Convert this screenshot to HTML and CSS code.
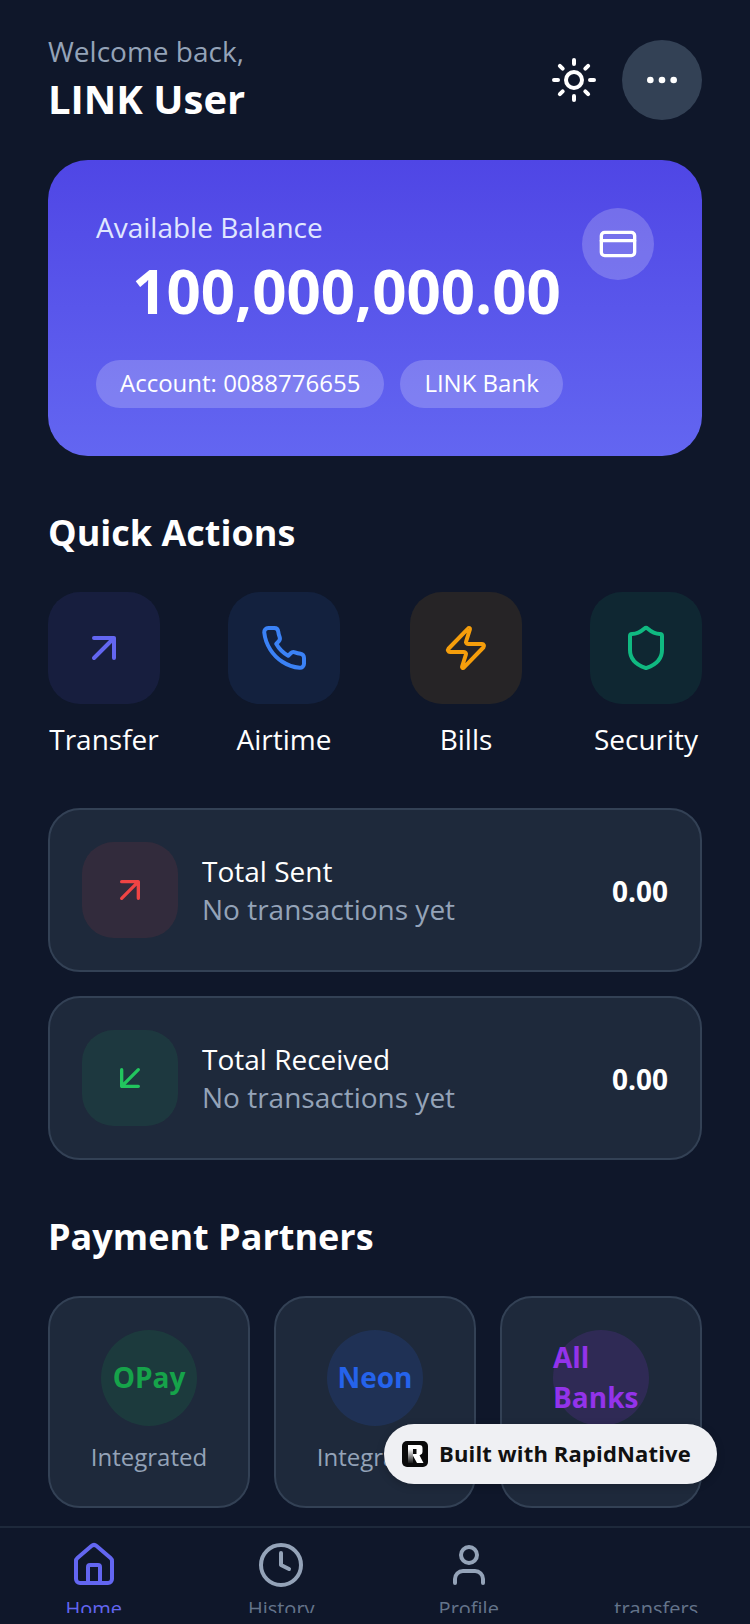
FILE: index.html
```html
<!DOCTYPE html>
<html lang="en">
<head>
    <meta charset="UTF-8">
    <meta name="viewport" content="width=device-width, initial-scale=1.0">
    <title>LINK Bank</title>
    <link rel="stylesheet" href="styles.css">
</head>
<body>

    <div class="screen">
        <main class="content">
            <header class="header">
                <div class="greeting">
                    <p class="welcome">Welcome back,</p>
                    <h1 class="user-name">LINK User</h1>
                </div>
                <div class="header-actions">
                    <svg class="icon icon-48 white" viewBox="0 0 24 24"><circle cx="12" cy="12" r="4"/><path d="M12 2v2M12 20v2M4.93 4.93l1.41 1.41M17.66 17.66l1.41 1.41M2 12h2M20 12h2M6.34 17.66l-1.41 1.41M19.07 4.93l-1.41 1.41"/></svg>
                    <div class="more-button">
                        <svg class="icon icon-40 white" viewBox="0 0 24 24"><circle cx="12" cy="12" r="1"/><circle cx="19" cy="12" r="1"/><circle cx="5" cy="12" r="1"/></svg>
                    </div>
                </div>
            </header>

            <section class="balance-card">
                <div class="balance-top">
                    <div class="balance-left">
                        <p class="balance-label">Available Balance</p>
                        <p class="balance-amount">100,000,000.00</p>
                    </div>
                    <div class="card-badge">
                        <svg class="icon icon-40 white" viewBox="0 0 24 24"><rect x="2" y="5" width="20" height="14" rx="2"/><path d="M2 10h20"/></svg>
                    </div>
                </div>
                <div class="pills">
                    <span class="pill">Account: 0088776655</span>
                    <span class="pill">LINK Bank</span>
                </div>
            </section>

            <h2 class="section-title">Quick Actions</h2>
            <div class="quick-actions">
                <div class="quick-item">
                    <div class="quick-tile tile-indigo">
                        <svg class="icon icon-48 indigo" viewBox="0 0 24 24"><path d="M7 7h10v10M7 17 17 7"/></svg>
                    </div>
                    <span class="quick-label">Transfer</span>
                </div>
                <div class="quick-item">
                    <div class="quick-tile tile-blue">
                        <svg class="icon icon-48 blue" viewBox="0 0 24 24"><path d="M22 16.92v3a2 2 0 0 1-2.18 2 19.79 19.79 0 0 1-8.63-3.07 19.5 19.5 0 0 1-6-6 19.79 19.79 0 0 1-3.07-8.67A2 2 0 0 1 4.11 2h3a2 2 0 0 1 2 1.72 12.84 12.84 0 0 0 .7 2.81 2 2 0 0 1-.45 2.11L8.09 9.91a16 16 0 0 0 6 6l1.27-1.27a2 2 0 0 1 2.11-.45 12.84 12.84 0 0 0 2.81.7A2 2 0 0 1 22 16.92z"/></svg>
                    </div>
                    <span class="quick-label">Airtime</span>
                </div>
                <div class="quick-item">
                    <div class="quick-tile tile-amber">
                        <svg class="icon icon-48 amber" viewBox="0 0 24 24"><path d="M4 14a1 1 0 0 1-.78-1.63l9.9-10.2a.5.5 0 0 1 .86.46l-1.92 6.02A1 1 0 0 0 13 10h7a1 1 0 0 1 .78 1.63l-9.9 10.2a.5.5 0 0 1-.86-.46l1.92-6.02A1 1 0 0 0 11 14z"/></svg>
                    </div>
                    <span class="quick-label">Bills</span>
                </div>
                <div class="quick-item">
                    <div class="quick-tile tile-green">
                        <svg class="icon icon-48 emerald" viewBox="0 0 24 24"><path d="M20 13c0 5-3.5 7.5-7.66 8.95a1 1 0 0 1-.67-.01C7.5 20.5 4 18 4 13V6a1 1 0 0 1 1-1c2 0 4.5-1.2 6.24-2.72a1.17 1.17 0 0 1 1.52 0C14.51 3.81 17 5 19 5a1 1 0 0 1 1 1z"/></svg>
                    </div>
                    <span class="quick-label">Security</span>
                </div>
            </div>

            <div class="stats">
                <div class="stat-card">
                    <div class="stat-icon stat-red">
                        <svg class="icon icon-40 red" viewBox="0 0 24 24"><path d="M7 7h10v10M7 17 17 7"/></svg>
                    </div>
                    <div class="stat-text">
                        <p class="stat-title">Total Sent</p>
                        <p class="stat-sub">No transactions yet</p>
                    </div>
                    <span class="stat-value">0.00</span>
                </div>
                <div class="stat-card">
                    <div class="stat-icon stat-green">
                        <svg class="icon icon-40 green" viewBox="0 0 24 24"><path d="M17 7 7 17M17 17H7V7"/></svg>
                    </div>
                    <div class="stat-text">
                        <p class="stat-title">Total Received</p>
                        <p class="stat-sub">No transactions yet</p>
                    </div>
                    <span class="stat-value">0.00</span>
                </div>
            </div>

            <h2 class="section-title">Payment Partners</h2>
            <div class="partners">
                <div class="partner-card">
                    <div class="partner-circle circle-green"><span class="partner-name text-green">OPay</span></div>
                    <span class="partner-status">Integrated</span>
                </div>
                <div class="partner-card">
                    <div class="partner-circle circle-blue"><span class="partner-name text-blue">Neon</span></div>
                    <span class="partner-status">Integrated</span>
                </div>
                <div class="partner-card">
                    <div class="partner-circle circle-purple"><span class="partner-name text-purple">All Banks</span></div>
                    <span class="partner-status">Integrated</span>
                </div>
            </div>
        </main>

        <nav class="tab-bar">
            <div class="tab tab-active">
                <svg class="icon icon-48 indigo" viewBox="0 0 24 24"><path d="M15 21v-8a1 1 0 0 0-1-1h-4a1 1 0 0 0-1 1v8"/><path d="M3 10a2 2 0 0 1 .709-1.528l7-5.999a2 2 0 0 1 2.582 0l7 5.999A2 2 0 0 1 21 10v9a2 2 0 0 1-2 2H5a2 2 0 0 1-2-2z"/></svg>
                <span class="tab-label">Home</span>
            </div>
            <div class="tab">
                <svg class="icon icon-48 slate" viewBox="0 0 24 24"><circle cx="12" cy="12" r="10"/><path d="M12 6v6l4 2"/></svg>
                <span class="tab-label">History</span>
            </div>
            <div class="tab">
                <svg class="icon icon-48 slate" viewBox="0 0 24 24"><path d="M19 21v-2a4 4 0 0 0-4-4H9a4 4 0 0 0-4 4v2"/><circle cx="12" cy="7" r="4"/></svg>
                <span class="tab-label">Profile</span>
            </div>
            <div class="tab">
                <div class="icon-48"></div>
                <span class="tab-label">transfers</span>
            </div>
        </nav>

        <div class="built-badge">
            <svg class="built-logo" viewBox="0 0 26 26">
                <defs>
                    <linearGradient id="stemFade" x1="0" y1="0" x2="0" y2="1">
                        <stop offset="0" stop-color="#fff"/>
                        <stop offset="1" stop-color="#1a1a1a"/>
                    </linearGradient>
                </defs>
                <rect width="26" height="26" rx="5" fill="#0a0a0a"/>
                <path d="M6 4h11.5a3 3 0 0 1 3 3v4a3 3 0 0 1-2 2.8l-1 .4 4 7.8H15l-5-9h4.5V8H6z" fill="#fff"/>
                <path d="M6 8h5v14H6z" fill="url(#stemFade)"/>
            </svg>
            <span class="built-text">Built with RapidNative</span>
        </div>
    </div>

</body>
</html>
```

FILE: styles.css
```css
* {
    box-sizing: border-box;
}

body {
    font-family: "Open Sans", "Noto Sans", sans-serif;
    background-color: #0f172a;
    color: #fff;
    margin: 0;
    padding: 0;
}

p, h1, h2 {
    margin: 0;
}

.screen {
    position: relative;
    width: 750px;
    height: 1624px;
    display: flex;
    flex-direction: column;
    overflow: hidden;
}

.content {
    flex: 1;
    min-height: 0;
    padding: 40px 48px 0;
    overflow: hidden;
}

.icon {
    display: block;
    fill: none;
    stroke: currentColor;
    stroke-width: 2;
    stroke-linecap: round;
    stroke-linejoin: round;
    flex-shrink: 0;
}

.icon-48 {
    width: 48px;
    height: 48px;
}

.icon-40 {
    width: 40px;
    height: 40px;
}

.white { color: #fff; }
.indigo { color: #6366f1; }
.blue { color: #3b82f6; }
.amber { color: #f59e0b; }
.emerald { color: #10b981; }
.red { color: #ef4444; }
.green { color: #22c55e; }
.slate { color: #94a3b8; }

/* header */
.header {
    display: flex;
    justify-content: space-between;
    align-items: center;
    height: 80px;
    margin-bottom: 40px;
}

.greeting {
    padding-bottom: 6px;
}

.welcome {
    font-size: 28px;
    line-height: 40px;
    color: #94a3b8;
}

.user-name {
    font-size: 40px;
    line-height: 48px;
    font-weight: 700;
    margin-top: 4px;
}

.header-actions {
    display: flex;
    align-items: center;
    gap: 24px;
}

.more-button {
    width: 80px;
    height: 80px;
    border-radius: 50%;
    background-color: #334155;
    display: flex;
    align-items: center;
    justify-content: center;
}

/* balance card */
.balance-card {
    background: linear-gradient(180deg, #4f46e5, #6366f1);
    border-radius: 40px;
    padding: 48px;
}

.balance-top {
    display: flex;
    justify-content: space-between;
    align-items: flex-start;
}

.balance-left {
    flex: 1;
}

.balance-label {
    font-size: 28px;
    line-height: 38px;
    color: #e0e7ff;
}

.balance-amount {
    font-size: 60px;
    line-height: 72px;
    font-weight: 700;
    text-align: center;
    padding-left: 15px;
    margin-top: 9px;
}

.card-badge {
    width: 72px;
    height: 72px;
    border-radius: 50%;
    background-color: rgba(255, 255, 255, 0.2);
    display: flex;
    align-items: center;
    justify-content: center;
}

.pills {
    display: flex;
    gap: 16px;
    margin-top: 33px;
}

.pill {
    font-size: 24px;
    line-height: 32px;
    padding: 7px 24px 9px;
    border-radius: 24px;
    background-color: rgba(255, 255, 255, 0.2);
}

/* sections */
.section-title {
    font-size: 36px;
    line-height: 56px;
    font-weight: 700;
    margin-top: 49px;
    margin-bottom: 31px;
}

.quick-actions {
    display: grid;
    grid-template-columns: 180px 182px 180px 112px;
}

.quick-item {
    width: 112px;
    display: flex;
    flex-direction: column;
    align-items: center;
    gap: 15px;
}

.quick-tile {
    width: 112px;
    height: 112px;
    border-radius: 32px;
    display: flex;
    align-items: center;
    justify-content: center;
}

.tile-indigo { background-color: rgba(99, 102, 241, 0.1); }
.tile-blue { background-color: rgba(59, 130, 246, 0.1); }
.tile-amber { background-color: rgba(245, 158, 11, 0.1); }
.tile-green { background-color: rgba(16, 185, 129, 0.1); }

.quick-label {
    font-size: 28px;
    line-height: 40px;
    white-space: nowrap;
}

/* stats */
.stats {
    display: flex;
    flex-direction: column;
    gap: 24px;
    margin-top: 49px;
}

.stat-card {
    display: flex;
    align-items: center;
    gap: 24px;
    padding: 32px;
    background-color: #1e293b;
    border: 2px solid #334155;
    border-radius: 32px;
}

.stat-icon {
    width: 96px;
    height: 96px;
    border-radius: 32px;
    display: flex;
    align-items: center;
    justify-content: center;
}

.stat-red { background-color: rgba(239, 68, 68, 0.1); }
.stat-green { background-color: rgba(34, 197, 94, 0.1); }

.stat-text {
    flex: 1;
}

.stat-title {
    font-size: 28px;
    line-height: 38px;
}

.stat-sub {
    font-size: 28px;
    line-height: 38px;
    color: #94a3b8;
}

.stat-value {
    font-size: 28px;
    font-weight: 700;
    padding-top: 2px;
}

/* partners */
.partners {
    display: flex;
    gap: 24px;
}

.partner-card {
    flex: 1;
    display: flex;
    flex-direction: column;
    align-items: center;
    gap: 13px;
    padding: 32px 32px 31px;
    background-color: #1e293b;
    border: 2px solid #334155;
    border-radius: 32px;
}

.partner-circle {
    width: 96px;
    height: 96px;
    border-radius: 50%;
    display: flex;
    align-items: center;
    justify-content: center;
}

.circle-green { background-color: rgba(22, 163, 74, 0.15); }
.circle-blue { background-color: rgba(37, 99, 235, 0.15); }
.circle-purple { background-color: rgba(147, 51, 234, 0.15); }

.partner-name {
    font-size: 28px;
    line-height: 40px;
    font-weight: 700;
    padding-bottom: 2px;
}

.text-green { color: #16a34a; }
.text-blue { color: #2563eb; }
.text-purple { color: #9333ea; }

.partner-status {
    font-size: 24px;
    line-height: 36px;
    color: #94a3b8;
}

/* tab bar */
.tab-bar {
    display: grid;
    grid-template-columns: repeat(4, 1fr);
    height: 87px;
    margin-bottom: 11px;
    padding-top: 13px;
    border-top: 2px solid #1e293b;
    overflow: hidden;
}

.tab {
    display: flex;
    flex-direction: column;
    align-items: center;
    gap: 4px;
}

.tab-label {
    font-size: 20px;
    line-height: 32px;
    color: #64748b;
}

.tab-active .tab-label {
    color: #6366f1;
}

/* floating badge */
.built-badge {
    position: absolute;
    left: 384px;
    top: 1424px;
    width: 333px;
    height: 60px;
    display: flex;
    align-items: center;
    gap: 11px;
    padding: 0 0 0 18px;
    background-color: #eff0f3;
    border-radius: 30px;
    box-shadow: 0 2px 8px rgba(0, 0, 0, 0.2);
}

.built-logo {
    width: 26px;
    height: 26px;
}

.built-text {
    font-size: 22px;
    line-height: 28px;
    font-weight: 700;
    letter-spacing: 0.15px;
    color: #111;
    padding-bottom: 2px;
}
```
